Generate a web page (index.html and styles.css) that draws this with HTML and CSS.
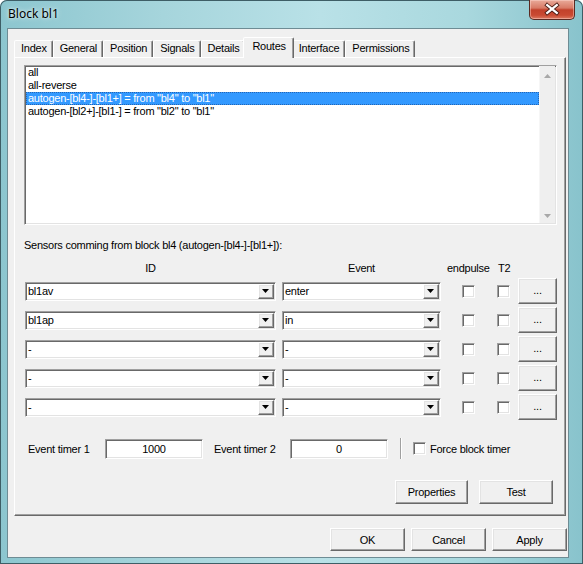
FILE: index.html
```html
<!DOCTYPE html>
<html>
<head>
<meta charset="utf-8">
<title>Block bl1</title>
<link rel="stylesheet" href="styles.css">
</head>
<body>
<div class="window">
  <div class="titlebar">
    <span class="title">Block bl1</span>
    <div class="close">
      <svg width="46" height="19" viewBox="0 0 46 19">
        <path d="M18 5 L28 13 M28 5 L18 13" stroke="#4a1c14" stroke-width="4.2" stroke-linecap="square" fill="none"/>
        <path d="M18 5 L28 13 M28 5 L18 13" stroke="#ffffff" stroke-width="2.4" stroke-linecap="square" fill="none"/>
      </svg>
    </div>
  </div>
  <div class="client">
    <div class="tabs">
      <div class="tab">Index</div>
      <div class="tab">General</div>
      <div class="tab">Position</div>
      <div class="tab">Signals</div>
      <div class="tab">Details</div>
      <div class="tab active">Routes</div>
      <div class="tab">Interface</div>
      <div class="tab">Permissions</div>
    </div>
    <div class="panel">
      <div class="listbox">
        <div class="items">
          <div class="item">all</div>
          <div class="item">all-reverse</div>
          <div class="item selected">autogen-[bl4-]-[bl1+] = from "bl4" to "bl1"</div>
          <div class="item">autogen-[bl2+]-[bl1-] = from "bl2" to "bl1"</div>
        </div>
        <div class="vscroll">
          <svg class="arrow" width="7" height="4" viewBox="0 0 7 4"><polygon points="0,4 7,4 3.5,0" fill="#a8a8a8"/></svg>
          <svg class="arrow" width="7" height="4" viewBox="0 0 7 4"><polygon points="0,0 7,0 3.5,4" fill="#a8a8a8"/></svg>
        </div>
      </div>

      <div class="sensors-label">Sensors comming from block bl4 (autogen-[bl4-]-[bl1+]):</div>

      <div class="sensor-grid">
        <div class="hdr">ID</div>
        <div class="hdr">Event</div>
        <div class="hdr">endpulse</div>
        <div class="hdr hdr-t2">T2</div>
        <div class="hdr"></div>

        <div class="combo"><span class="combo-text">bl1av</span><span class="drop"><svg width="7" height="4" viewBox="0 0 7 4"><polygon points="0,0 7,0 3.5,4" fill="#000"/></svg></span></div>
        <div class="combo"><span class="combo-text">enter</span><span class="drop"><svg width="7" height="4" viewBox="0 0 7 4"><polygon points="0,0 7,0 3.5,4" fill="#000"/></svg></span></div>
        <div class="cell"><span class="check"></span></div>
        <div class="cell"><span class="check"></span></div>
        <div class="btn dots">...</div>

        <div class="combo"><span class="combo-text">bl1ap</span><span class="drop"><svg width="7" height="4" viewBox="0 0 7 4"><polygon points="0,0 7,0 3.5,4" fill="#000"/></svg></span></div>
        <div class="combo"><span class="combo-text">in</span><span class="drop"><svg width="7" height="4" viewBox="0 0 7 4"><polygon points="0,0 7,0 3.5,4" fill="#000"/></svg></span></div>
        <div class="cell"><span class="check"></span></div>
        <div class="cell"><span class="check"></span></div>
        <div class="btn dots">...</div>

        <div class="combo"><span class="combo-text">-</span><span class="drop"><svg width="7" height="4" viewBox="0 0 7 4"><polygon points="0,0 7,0 3.5,4" fill="#000"/></svg></span></div>
        <div class="combo"><span class="combo-text">-</span><span class="drop"><svg width="7" height="4" viewBox="0 0 7 4"><polygon points="0,0 7,0 3.5,4" fill="#000"/></svg></span></div>
        <div class="cell"><span class="check"></span></div>
        <div class="cell"><span class="check"></span></div>
        <div class="btn dots">...</div>

        <div class="combo"><span class="combo-text">-</span><span class="drop"><svg width="7" height="4" viewBox="0 0 7 4"><polygon points="0,0 7,0 3.5,4" fill="#000"/></svg></span></div>
        <div class="combo"><span class="combo-text">-</span><span class="drop"><svg width="7" height="4" viewBox="0 0 7 4"><polygon points="0,0 7,0 3.5,4" fill="#000"/></svg></span></div>
        <div class="cell"><span class="check"></span></div>
        <div class="cell"><span class="check"></span></div>
        <div class="btn dots">...</div>

        <div class="combo"><span class="combo-text">-</span><span class="drop"><svg width="7" height="4" viewBox="0 0 7 4"><polygon points="0,0 7,0 3.5,4" fill="#000"/></svg></span></div>
        <div class="combo"><span class="combo-text">-</span><span class="drop"><svg width="7" height="4" viewBox="0 0 7 4"><polygon points="0,0 7,0 3.5,4" fill="#000"/></svg></span></div>
        <div class="cell"><span class="check"></span></div>
        <div class="cell"><span class="check"></span></div>
        <div class="btn dots">...</div>
      </div>

      <div class="timers">
        <span class="timer-label first">Event timer 1</span>
        <div class="field">1000</div>
        <span class="timer-label second">Event timer 2</span>
        <div class="field">0</div>
        <span class="vsep"></span>
        <span class="check force"></span>
        <span class="force-label">Force block timer</span>
      </div>

      <div class="actions">
        <div class="btn props">Properties</div>
        <div class="btn test">Test</div>
      </div>
    </div>

    <div class="dialog-buttons">
      <div class="btn dlg">OK</div>
      <div class="btn dlg">Cancel</div>
      <div class="btn dlg">Apply</div>
    </div>
  </div>
</div>
</body>
</html>
```
FILE: styles.css
```css
* { box-sizing: border-box; }
html, body { margin: 0; padding: 0; }
body {
  width: 583px;
  height: 564px;
  overflow: hidden;
  background: #ffffff;
  font-family: "Liberation Sans", Arial, sans-serif;
  font-size: 11px;
  letter-spacing: -0.25px;
  color: #000;
}

.window {
  width: 583px;
  height: 564px;
  display: flex;
  flex-direction: column;
  padding: 0 15px 7px 8px;
  border-radius: 7px 7px 0 0;
  background:
    linear-gradient(90deg, #8cc6cf 0%, #a6d5dc 28%, #b9e1e7 55%, #a9d8de 80%, #88c3cc 100%);
  box-shadow: inset 0 0 0 1px #3e5e66;
}

.titlebar {
  height: 29px;
  display: flex;
  align-items: flex-start;
  flex: 0 0 auto;
}
.title {
  font-family: "Noto Sans", "Open Sans", sans-serif;
  font-size: 12px;
  letter-spacing: 0;
  line-height: 16px;
  padding-top: 6px;
  color: #000;
  text-shadow: 0 0 6px rgba(255,255,255,0.7), 0 0 3px rgba(255,255,255,0.7);
}
.close {
  margin-left: auto;
  margin-right: -7px;
  width: 46px;
  height: 20px;
  border: 1px solid #5a2a22;
  border-top: none;
  border-radius: 0 0 5px 5px;
  background: linear-gradient(#e9aa9a 0%, #d87a66 42%, #c2412b 52%, #c94a32 80%, #dc7a62 100%);
  box-shadow: inset 0 0 0 1px rgba(255,220,210,0.45);
  display: flex;
}

.client {
  width: 560px;
  height: 528px;
  background: #f0f0f0;
  box-shadow: 0 0 0 1px #6e8c94;
  padding: 8px 2px 0 6px;
  display: flex;
  flex-direction: column;
}

.tabs {
  display: flex;
  align-items: flex-end;
  height: 20px;
  position: relative;
  z-index: 2;
}
.tab {
  height: 17px;
  line-height: 15px;
  padding: 0 5px 0 6px;
  background: #f0f0f0;
  border: 1px solid;
  border-bottom: none;
  border-color: #ffffff #696969 transparent #ffffff;
  border-radius: 2px 2px 0 0;
  box-shadow: inset -1px 0 0 #a0a0a0;
  white-space: nowrap;
}
.tab.active {
  height: 21px;
  line-height: 17px;
  margin: 0 -2px -1px;
  padding: 0 7px 0 8px;
  position: relative;
  z-index: 3;
}

.panel {
  width: 552px;
  height: 459px;
  border: 1px solid;
  border-color: #ffffff #696969 #696969 #ffffff;
  box-shadow: inset -1px -1px 0 #a0a0a0;
  padding: 7px 9px 0 9px;
  display: flex;
  flex-direction: column;
}

.listbox {
  width: 533px;
  height: 160px;
  background: #fff;
  border: 1px solid;
  border-color: #a0a0a0 #ffffff #ffffff #a0a0a0;
  box-shadow: inset 1px 1px 0 #696969, inset -1px -1px 0 #e3e3e3;
  display: flex;
  padding: 0 1px 1px 1px;
}
.items {
  flex: 1;
}
.item {
  height: 13px;
  line-height: 13px;
  padding-left: 2px;
  white-space: nowrap;
}
.item.selected {
  background: #3399ff;
  color: #fff;
  outline: 1px dotted rgba(20, 40, 90, 0.45);
  outline-offset: -1px;
}
.vscroll {
  width: 16px;
  background: #efefef;
  border-left: 1px solid #f6f6f6;
  display: flex;
  flex-direction: column;
  justify-content: space-between;
  align-items: center;
  padding: 8px 0 5px;
}
.arrow { display: block; }

.sensors-label {
  margin-top: 13px;
  line-height: 14px;
  height: 14px;
}

.sensor-grid {
  margin-top: 9px;
  padding-left: 1px;
  display: grid;
  grid-template-columns: 251px 159px 42px 17px 39px;
  grid-template-rows: 14px repeat(5, 26px);
  column-gap: 6px;
  row-gap: 3px;
}
.hdr {
  text-align: center;
  line-height: 14px;
  white-space: nowrap;
}
.hdr-t2 { text-align: left; padding-left: 3px; }

.combo {
  align-self: center;
  height: 19px;
  background: #fff;
  border: 1px solid;
  border-color: #a0a0a0 #ffffff #ffffff #a0a0a0;
  box-shadow: inset 1px 1px 0 #696969, inset -1px -1px 0 #e3e3e3;
  display: flex;
  padding: 1px;
}
.combo-text {
  flex: 1;
  line-height: 15px;
  padding-left: 1px;
}
.drop {
  width: 16px;
  height: 15px;
  background: #f0f0f0;
  border: 1px solid;
  border-color: #ffffff #696969 #696969 #ffffff;
  box-shadow: inset -1px -1px 0 #a0a0a0, inset 1px 1px 0 #e3e3e3;
  display: flex;
  align-items: center;
  justify-content: center;
  padding-right: 1px;
}
.drop svg { display: block; }

.cell {
  display: flex;
  align-items: center;
  justify-content: center;
}
.check {
  display: inline-block;
  width: 13px;
  height: 13px;
  background: #fff;
  border: 1px solid;
  border-color: #a0a0a0 #ffffff #ffffff #a0a0a0;
  box-shadow: inset 1px 1px 0 #696969, inset -1px -1px 0 #e3e3e3;
}

.btn {
  background: #f0f0f0;
  border: 1px solid;
  border-color: #ffffff #696969 #696969 #ffffff;
  box-shadow: inset -1px -1px 0 #a0a0a0, inset 1px 1px 0 #e3e3e3;
  display: flex;
  align-items: center;
  justify-content: center;
  white-space: nowrap;
}
.dots {
  height: 26px;
  padding-bottom: 2px;
}

.timers {
  margin-top: 18px;
  height: 21px;
  display: flex;
  align-items: center;
}
.timer-label { display: inline-block; white-space: nowrap; }
.timer-label.first { width: 81px; padding-left: 4px; }
.timer-label.second { width: 76px; margin-left: 11px; }
.field {
  width: 98px;
  height: 20px;
  background: #fff;
  border: 1px solid;
  border-color: #a0a0a0 #ffffff #ffffff #a0a0a0;
  box-shadow: inset 1px 1px 0 #696969, inset -1px -1px 0 #e3e3e3;
  text-align: center;
  line-height: 18px;
}
.vsep {
  width: 2px;
  height: 21px;
  margin-left: 12px;
  border-left: 1px solid #a0a0a0;
  border-right: 1px solid #ffffff;
}
.check.force { margin-left: 11px; }
.force-label { margin-left: 4px; white-space: nowrap; }

.actions {
  margin-top: 21px;
  display: flex;
  justify-content: flex-end;
  gap: 11px;
  padding-right: 3px;
}
.props { width: 73px; height: 24px; }
.test { width: 74px; height: 24px; }

.dialog-buttons {
  margin-top: 12px;
  margin-right: -1px;
  display: flex;
  justify-content: flex-end;
  gap: 6px;
}
.dlg { width: 75px; height: 23px; }
```
